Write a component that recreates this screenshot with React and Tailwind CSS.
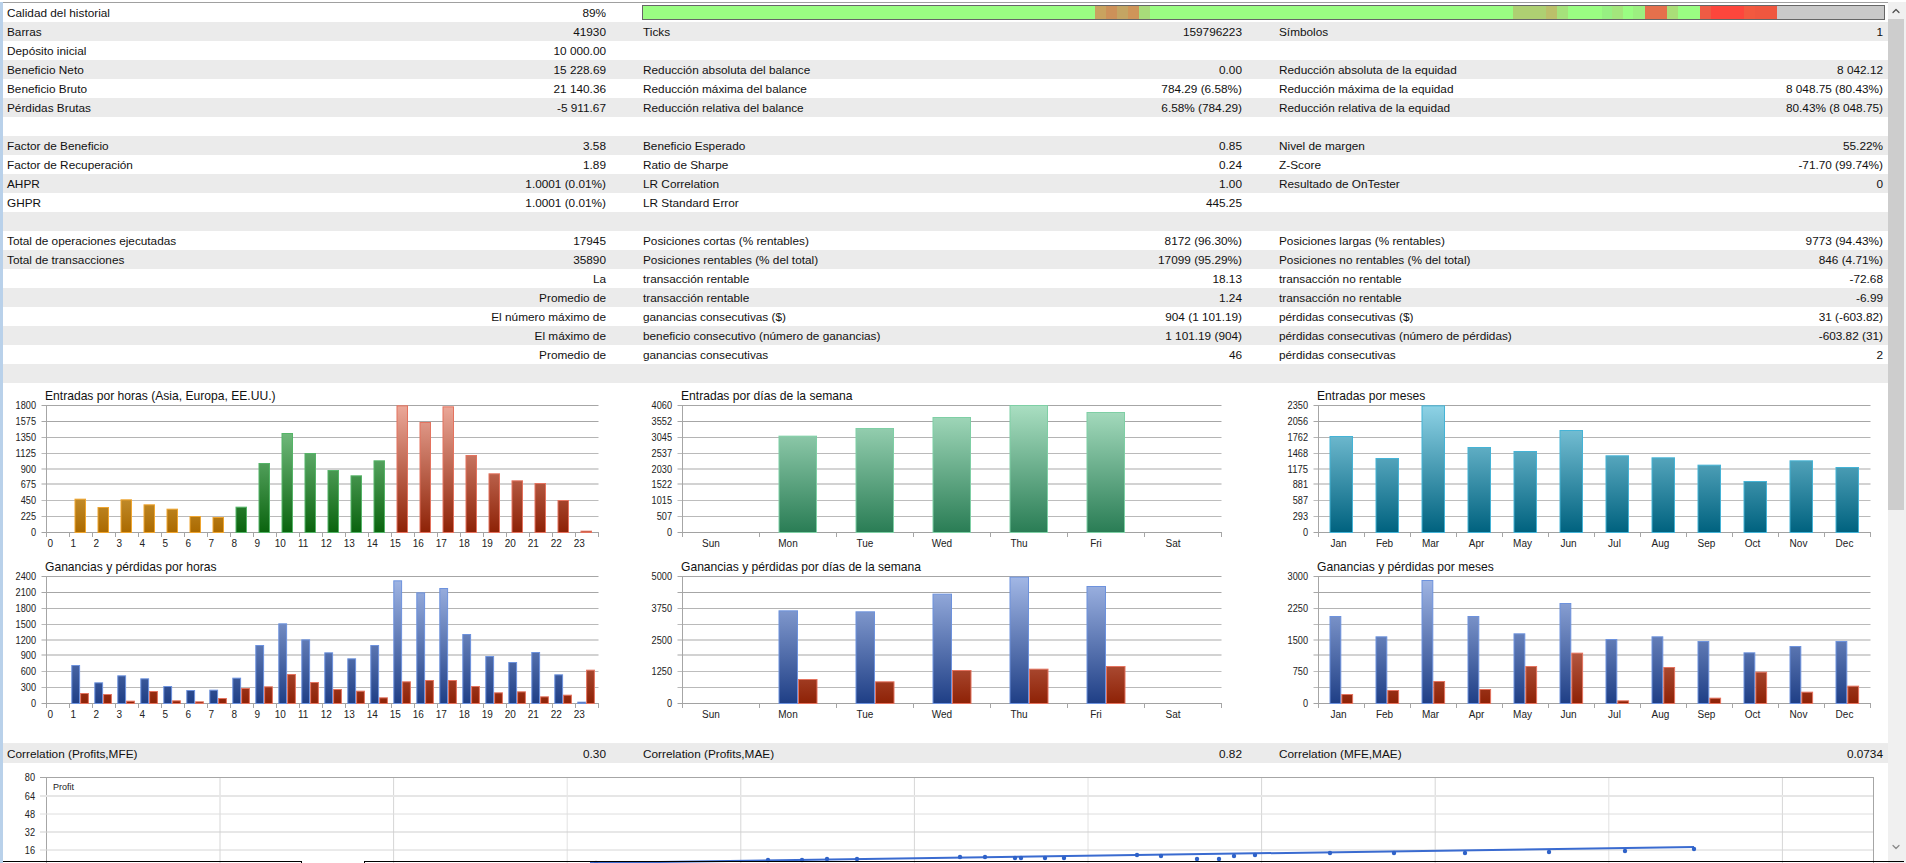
import { ChevronUp, ChevronDown } from 'lucide-react'

const ROWS = [
  [['Calidad del historial', '89%'], 'bar'],
  [['Barras', '41930'], ['Ticks', '159796223'], ['Símbolos', '1']],
  [['Depósito inicial', '10 000.00'], ['', ''], ['', '']],
  [['Beneficio Neto', '15 228.69'], ['Reducción absoluta del balance', '0.00'], ['Reducción absoluta de la equidad', '8 042.12']],
  [['Beneficio Bruto', '21 140.36'], ['Reducción máxima del balance', '784.29 (6.58%)'], ['Reducción máxima de la equidad', '8 048.75 (80.43%)']],
  [['Pérdidas Brutas', '-5 911.67'], ['Reducción relativa del balance', '6.58% (784.29)'], ['Reducción relativa de la equidad', '80.43% (8 048.75)']],
  [['', ''], ['', ''], ['', '']],
  [['Factor de Beneficio', '3.58'], ['Beneficio Esperado', '0.85'], ['Nivel de margen', '55.22%']],
  [['Factor de Recuperación', '1.89'], ['Ratio de Sharpe', '0.24'], ['Z-Score', '-71.70 (99.74%)']],
  [['AHPR', '1.0001 (0.01%)'], ['LR Correlation', '1.00'], ['Resultado de OnTester', '0']],
  [['GHPR', '1.0001 (0.01%)'], ['LR Standard Error', '445.25'], ['', '']],
  [['', ''], ['', ''], ['', '']],
  [['Total de operaciones ejecutadas', '17945'], ['Posiciones cortas (% rentables)', '8172 (96.30%)'], ['Posiciones largas (% rentables)', '9773 (94.43%)']],
  [['Total de transacciones', '35890'], ['Posiciones rentables (% del total)', '17099 (95.29%)'], ['Posiciones no rentables (% del total)', '846 (4.71%)']],
  [['', 'La'], ['transacción rentable', '18.13'], ['transacción no rentable', '-72.68']],
  [['', 'Promedio de'], ['transacción rentable', '1.24'], ['transacción no rentable', '-6.99']],
  [['', 'El número máximo de'], ['ganancias consecutivas ($)', '904 (1 101.19)'], ['pérdidas consecutivas ($)', '31 (-603.82)']],
  [['', 'El máximo de'], ['beneficio consecutivo (número de ganancias)', '1 101.19 (904)'], ['pérdidas consecutivas (número de pérdidas)', '-603.82 (31)']],
  [['', 'Promedio de'], ['ganancias consecutivas', '46'], ['pérdidas consecutivas', '2']],
  [['', ''], ['', ''], ['', '']],
]

const G = '#9afd82'
const QUALITY = [
  [642, 1094, G], [1094, 1105, '#c9a35f'], [1105, 1116, '#cd9159'], [1116, 1127, '#c4a563'], [1127, 1138, '#cf9559'],
  [1138, 1149, '#a8dc7a'], [1149, 1512, G], [1512, 1545, '#aed072'], [1545, 1556, '#bbc06a'], [1556, 1567, '#a5e27b'],
  [1567, 1601, G], [1601, 1611, '#97f082'], [1611, 1622, '#a3e67c'], [1622, 1632, G], [1632, 1644, '#9cf080'],
  [1644, 1666, '#e5704c'], [1666, 1677, '#aade78'], [1677, 1699, G], [1699, 1710, '#ef5b44'], [1710, 1743, '#fd463c'],
  [1743, 1754, '#f3593f'], [1754, 1776, '#f0573f'], [1776, 1885, '#c9c9c9'],
]

const COLORS = {
  orange: ['#fce5a0', '#ab6a00', '#efa52f'],
  green: ['#8cd09a', '#0a640e', '#55b468'],
  red: ['#eca99a', '#8e2206', '#e4735f'],
  sea: ['#aadfc2', '#2a7d55', '#7fcfa5'],
  teal: ['#8fd3e6', '#00627f', '#45b3d6'],
  blue: ['#a3b8e6', '#1f3f86', '#6d92dd'],
}

const HOURS = Array.from({ length: 24 }, (_, i) => String(i))
const DAYS = ['Sun', 'Mon', 'Tue', 'Wed', 'Thu', 'Fri', 'Sat']
const MONTHS = ['Jan', 'Feb', 'Mar', 'Apr', 'May', 'Jun', 'Jul', 'Aug', 'Sep', 'Oct', 'Nov', 'Dec']

// line look of the grid, top to bottom
const GRID = [
  ['#a6a6a6', 1], ['#a6a6a6', 1], ['#b4b4b4', 1], ['#bababa', 1], ['#d4d4d4', 2],
  ['#d2d2d2', 2], ['#bdbdbd', 1], ['#b9b9b9', 1], ['#a2a2a2', 1],
]

const X0 = 43.5
const TOP = 2
const BASE = 129

// tops are read off the reference with baseline at 457/445 in a 3x crop
const h = (tops, base) => tops.map((t) => (t == null ? 0 : (base - t) / 3))

const hourColor = (i) => (i < 8 ? 'orange' : i < 15 ? 'green' : 'red')

const CHARTS = [
  [
    {
      id: 'a', title: 'Entradas por horas (Asia, Europa, EE.UU.)', labels: HOURS, slot: 23, off: -7.8, bx: 5, bw: 11.5,
      ticks: ['1800', '1575', '1350', '1125', '900', '675', '450', '225', '0'],
      series: [{ values: h([null, 357, 382, 359, 374, 387, 409, 412, 381, 250, 160, 220, 271, 287, 242, 77, 127, 80, 226, 281, 302, 310, 361, 453], 457), colorAt: hourColor }],
    },
    {
      id: 'b', title: 'Entradas por días de la semana', labels: DAYS, slot: 77, off: -10, bx: 19, bw: 38.5,
      ticks: ['4060', '3552', '3045', '2537', '2030', '1522', '1015', '507', '0'],
      series: [{ values: h([null, 168, 145, 112, 76, 97, null], 457), colorAt: () => 'sea' }],
    },
    {
      id: 'c', title: 'Entradas por meses', labels: MONTHS, slot: 46, off: -3, bx: 11, bw: 23.5,
      ticks: ['2350', '2056', '1762', '1468', '1175', '881', '587', '293', '0'],
      series: [{ values: h([169, 235, 77, 202, 214, 151, 227, 233, 255, 304, 242, 262], 457), colorAt: () => 'teal' }],
    },
  ],
  [
    {
      id: 'd', title: 'Ganancias y pérdidas por horas', labels: HOURS, slot: 23, off: -7.8, bx: 1.8, bw: 8.8,
      ticks: ['2400', '2100', '1800', '1500', '1200', '900', '600', '300', '0'],
      series: [
        { values: h([null, 331, 383, 362, 371, 394, 406, 405, 369, 271, 206, 254, 293, 311, 271, 77, 113, 100, 238, 304, 322, 292, 359, 441], 445), colorAt: () => 'blue' },
        { values: h([null, 415, 418, 438, 409, 437, 440, 430, 400, 395, 358, 382, 403, 408, 428, 380, 376, 376, 394, 413, 410, 425, 420, 345], 445), colorAt: () => 'red' },
      ],
    },
    {
      id: 'e', title: 'Ganancias y pérdidas por días de la semana', labels: DAYS, slot: 77, off: -10, bx: 19, bw: 19.5,
      ticks: ['5000', '', '3750', '', '2500', '', '1250', '', '0'],
      series: [
        { values: h([null, 167, 170, 117, 66, 94, null], 445), colorAt: () => 'blue' },
        { values: h([null, 373, 380, 346, 342, 334, null], 445), colorAt: () => 'red' },
      ],
    },
    {
      id: 'f', title: 'Ganancias y pérdidas por meses', labels: MONTHS, slot: 46, off: -3, bx: 11, bw: 11.8,
      ticks: ['3000', '', '2250', '', '1500', '', '750', '', '0'],
      series: [
        { values: h([184, 245, 76, 184, 236, 145, 253, 245, 259, 293, 274, 259], 445), colorAt: () => 'blue' },
        { values: h([418, 406, 379, 403, 334, 294, 437, 337, 429, 351, 411, 393], 445), colorAt: () => 'red' },
      ],
    },
  ],
]

function Cell({ cell, last }) {
  return (
    <div className={`flex justify-between pl-1 whitespace-nowrap ${last ? 'pr-1' : 'pr-[33px]'}`}>
      <span>{cell[0]}</span>
      <span>{cell[1]}</span>
    </div>
  )
}

function QualityBar() {
  return (
    <div className="col-span-2 pl-[3px] pr-[2px] pt-[2px]">
      <div className="flex h-[15px] border border-[#666666] overflow-hidden">
        {QUALITY.map(([a, b, c]) => (
          <div key={a} className="h-full shrink-0" style={{ width: b - a, backgroundColor: c }} />
        ))}
      </div>
    </div>
  )
}

function Row({ row, gray }) {
  return (
    <div className={`grid grid-cols-[636px_636px_612px] h-[19px] leading-[21px] ${gray ? 'bg-[#ebebeb]' : ''}`}>
      {row.map((cell, i) =>
        cell === 'bar' ? <QualityBar key={i} /> : <Cell key={i} cell={cell} last={i === 2} />
      )}
    </div>
  )
}

function BarChart({ chart }) {
  const { id, labels, slot, off, bx, bw, ticks, series } = chart
  const width = slot * labels.length
  const step = (BASE - TOP) / 8
  return (
    <svg width="600" height="150" className="block overflow-visible">
      <defs>
        {Object.entries(COLORS).map(([name, [a, b]]) => (
          <linearGradient key={name} id={`${id}-${name}`} gradientUnits="userSpaceOnUse" x1="0" x2="0" y1={TOP} y2={BASE}>
            <stop offset="0" stopColor={a} />
            <stop offset="1" stopColor={b} />
          </linearGradient>
        ))}
      </defs>
      {ticks.map((t, i) => {
        const raw = TOP + step * i
        const [color, sw] = GRID[i]
        const y = sw === 2 ? Math.round(raw) : Math.round(raw) + 0.5
        return (
          <g key={i}>
            <line x1={X0 - 5} x2={X0 + width} y1={y} y2={y} stroke={color} strokeWidth={sw} />
            {t && (
              <text x={33} y={Math.round(raw) + 4} textAnchor="end" fontSize="10" fill="#222222" textLength={t.length * 5.1} lengthAdjust="spacingAndGlyphs">{t}</text>
            )}
          </g>
        )
      })}
      <line x1={X0} x2={X0} y1={TOP} y2={BASE + 5} stroke="#a6a6a6" />
      {labels.map((l, i) => (
        <g key={l}>
          <line x1={X0 + slot * (i + 1)} x2={X0 + slot * (i + 1)} y1={BASE} y2={BASE + 5} stroke="#a6a6a6" />
          <text x={X0 + slot * (i + 0.5) + off} y={144} textAnchor="middle" fontSize="10" fill="#222222">{l}</text>
        </g>
      ))}
      {series.map((s, k) =>
        s.values.map((v, i) =>
          v > 0 ? (
            <rect
              key={`${k}-${i}`}
              x={X0 + slot * i + bx + bw * k + 0.5}
              y={BASE + 0.5 - v}
              width={bw - 1}
              height={v}
              fill={`url(#${id}-${s.colorAt(i)})`}
              stroke={COLORS[s.colorAt(i)][2]}
            />
          ) : null
        )
      )}
    </svg>
  )
}

function ChartRow({ charts, pad }) {
  return (
    <div className={`grid grid-cols-[636px_636px_612px] ${pad}`}>
      {charts.map((c) => (
        <div key={c.id}>
          <div className="h-[14px] leading-[14px] pl-[42px] whitespace-nowrap text-[12.1px] text-[#111111]">{c.title}</div>
          <BarChart chart={c} />
        </div>
      ))}
    </div>
  )
}

const VLINES = [0, 1, 2, 3, 4, 5, 6, 7, 8, 9].map((k) => 217 + 173.6 * k)
const HLINES = [[33, '#e6e6e6', 2, '64'], [51, '#dedede', 1, '48'], [69, '#cfcfcf', 1, '32'], [87, '#d6d6d6', 1, '16']]
const DOTS = [
  [593, 100], [765, 97], [799, 97], [824, 96], [854, 96], [957, 94], [982, 94], [1012, 95], [1018, 95], [1042, 95], [1061, 95],
  [1134, 92], [1158, 93], [1194, 96], [1216, 96], [1231, 93], [1252, 92], [1327, 90], [1391, 90], [1462, 90], [1546, 89], [1622, 88], [1691, 86],
]

function ProfitChart() {
  return (
    <svg width="1885" height="100" className="block">
      <rect x="43.5" y="14.5" width="1827" height="90" fill="none" stroke="#a6a6a6" />
      {VLINES.map((x, i) => (
        <line key={i} x1={x} x2={x} y1="15" y2="100" stroke={i % 3 === 2 ? '#e2e2e2' : '#d6d6d6'} />
      ))}
      {HLINES.map(([y, c, sw, t]) => (
        <g key={t}>
          <line x1="37" x2="1870" y1={y} y2={y} stroke={c} strokeWidth={sw} />
          <text x="32" y={y + 4} textAnchor="end" fontSize="10" fill="#222222" textLength={t.length * 5.1} lengthAdjust="spacingAndGlyphs">{t}</text>
        </g>
      ))}
      <line x1="37" x2="43" y1="14.5" y2="14.5" stroke="#a6a6a6" />
      <text x="32" y="18" textAnchor="end" fontSize="10" fill="#222222" textLength="10.2" lengthAdjust="spacingAndGlyphs">80</text>
      <text x="50" y="27" fontSize="9" fill="#222222">Profit</text>
      <line x1="587" y1="100" x2="1691" y2="84" stroke="#3a6bd0" strokeWidth="2" />
      {DOTS.map(([x, y]) => (
        <circle key={x} cx={x} cy={y} r="2.2" fill="#2f62c8" />
      ))}
    </svg>
  )
}

function Scrollbar() {
  return (
    <div className="w-[18px] h-full bg-[#f0f0f0] shrink-0 flex flex-col">
      <div className="w-[16px] h-[17px] pt-[3px] flex justify-center">
        <ChevronUp size={12} strokeWidth={2.5} className="text-[#505050]" />
      </div>
      <div className="w-[16px] h-[491px] bg-[#cdcdcd]" />
      <div className="w-[16px] mt-auto h-[18px] mb-[4px] flex justify-center">
        <ChevronDown size={12} strokeWidth={2.5} className="text-[#8a8a8a]" />
      </div>
    </div>
  )
}

export default function App() {
  return (
    <div className="relative w-[1906px] h-[863px] overflow-hidden bg-white pt-[2px] flex font-['Liberation_Sans',Arial,sans-serif] text-[11.8px] text-[#111111]">
      <div className="w-[3px] h-full bg-[#b9d1ea] shrink-0" />
      <div className="w-[1885px] shrink-0 border-t border-[#a0a0a0]">
        {ROWS.map((row, i) => (
          <Row key={i} row={row} gray={i % 2 === 1} />
        ))}
        <ChartRow charts={CHARTS[0]} pad="pt-[6px] pb-[1px] h-[171px]" />
        <ChartRow charts={CHARTS[1]} pad="pt-[6px] h-[190px] border-b border-[#ececec]" />
        <Row row={[['Correlation (Profits,MFE)', '0.30'], ['Correlation (Profits,MAE)', '0.82'], ['Correlation (MFE,MAE)', '0.0734']]} gray />
        <ProfitChart />
      </div>
      <Scrollbar />
      {/* edge of the windows lying on top of the report */}
      <div className="absolute left-[3px] bottom-0 w-[299px] h-[2px] border-t border-r border-black" />
      <div className="absolute left-[364px] right-[2px] bottom-0 h-[2px] border-t border-l border-black" />
    </div>
  )
}
